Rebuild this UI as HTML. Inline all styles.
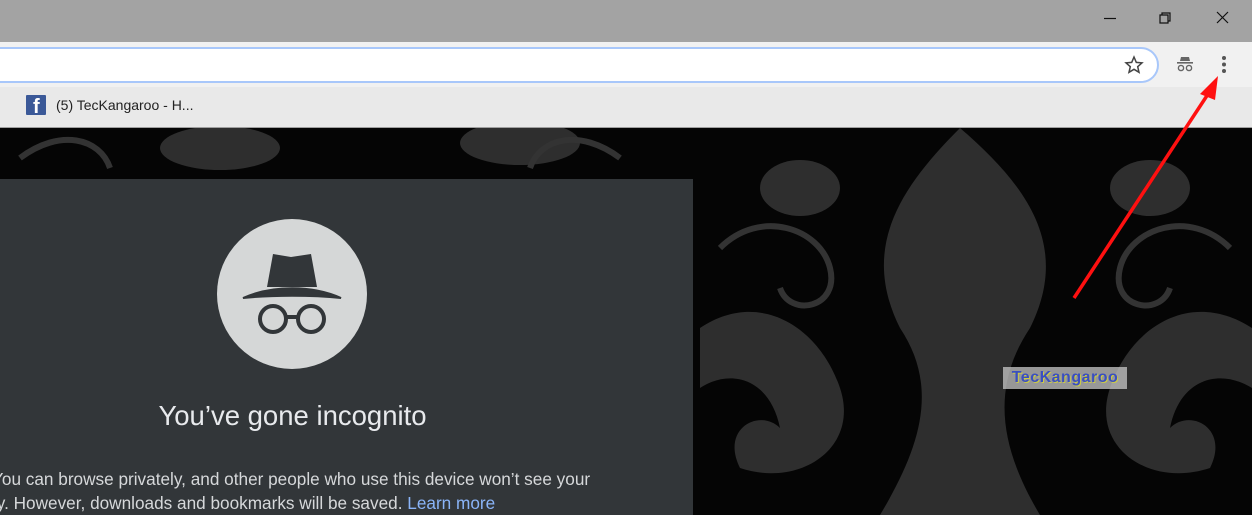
<!DOCTYPE html>
<html><head><style>
html,body{margin:0;width:1252px;height:515px;overflow:hidden}
body{position:relative;font-family:"Liberation Sans",sans-serif;background:#050505}
.t{position:absolute;left:0;top:0;width:1252px;height:42px;background:#a3a3a3}
.tb{position:absolute;left:0;top:42px;width:1252px;height:45px;background:#f1f1f1}
.bb{position:absolute;left:0;top:87px;width:1252px;height:40px;background:#e9e9e9;border-bottom:1px solid #a0a0a0}
.addr{position:absolute;left:-20px;top:47px;width:1175px;height:32px;background:#fff;border:2px solid #a8c7fa;border-radius:18px}
.panel{position:absolute;left:0;top:179px;width:693px;height:336px;background:#323639}
.h{position:absolute;left:0;width:585px;text-align:center;top:400px;font-size:27.5px;color:#e8eaed}
.p{position:absolute;left:-8px;font-size:17.2px;color:#d6d8da;white-space:nowrap}
.p a{color:#8ab4f8;text-decoration:none}
</style></head><body>
<svg style="position:absolute;left:0;top:128px" width="1252" height="387">
<g fill="#2e2e2e">
<path d="M960 0 C900 60 860 120 900 200 C940 260 920 320 880 387 L1040 387 C1000 320 990 260 1030 200 C1070 120 1030 60 960 0Z"/>
<path d="M700 200 C760 160 820 200 840 260 C860 320 800 360 740 340 C720 300 760 280 780 300 C770 250 730 240 700 260Z"/>
<path d="M1252 200 C1190 160 1130 200 1110 260 C1090 320 1150 360 1210 340 C1230 300 1190 280 1170 300 C1180 250 1220 240 1252 260Z"/>
<ellipse cx="800" cy="60" rx="40" ry="28"/><ellipse cx="1150" cy="60" rx="40" ry="28"/>
<ellipse cx="220" cy="20" rx="60" ry="22"/><ellipse cx="520" cy="15" rx="60" ry="22"/>
</g>
<g fill="none" stroke="#333" stroke-width="6">
<path d="M720 120 C760 80 820 100 830 140 C840 180 790 190 780 160"/>
<path d="M1230 120 C1190 80 1130 100 1120 140 C1110 180 1160 190 1170 160"/>
<path d="M20 30 C60 0 100 10 110 40"/><path d="M620 30 C580 0 540 10 530 40"/>
</g>
</svg>
<div class="t"></div>
<svg style="position:absolute;left:1100px;top:8px" width="140" height="24" fill="none" stroke="#111" stroke-width="1.2">
<path d="M4 10.5H16"/><path d="M60 7h8v8h-8z M62 7V5h8v8h-2"/><path d="M117 4l11 11M128 4l-11 11"/></svg>
<div class="tb"></div>
<div class="addr"></div>
<svg style="position:absolute;left:1124px;top:55px" width="20" height="20"><path d="M10 2l2.3 5.4 5.7.5-4.3 3.8 1.3 5.6L10 14.3 5 17.3l1.3-5.6L2 7.9l5.7-.5z" fill="none" stroke="#444" stroke-width="1.5"/></svg>
<svg style="position:absolute;left:1174px;top:55px" width="22" height="20" fill="#666"><path d="M7 2h8l1 4H6z"/><rect x="3" y="7" width="16" height="1.6"/><circle cx="7" cy="13" r="2.6" fill="none" stroke="#666" stroke-width="1.4"/><circle cx="15" cy="13" r="2.6" fill="none" stroke="#666" stroke-width="1.4"/></svg>
<svg style="position:absolute;left:1219px;top:55px" width="10" height="20" fill="#555"><circle cx="5" cy="3" r="2"/><circle cx="5" cy="9.5" r="2"/><circle cx="5" cy="16" r="2"/></svg>
<div class="bb"></div>
<div style="position:absolute;left:26px;top:95px;width:20px;height:20px;background:#3b5998;border-radius:1px;overflow:hidden"><span style="position:absolute;left:7px;top:1px;color:#fff;font-weight:bold;font-size:20px">f</span></div>
<div style="position:absolute;left:56px;top:97px;font-size:14px;color:#222">(5) TecKangaroo - H...</div>
<div class="panel"></div>
<svg style="position:absolute;left:217px;top:219px" width="150" height="150">
<circle cx="75" cy="75" r="75" fill="#d5d7d7"/>
<path d="M56 35 L74 38 L94 35 L100 68 L50 68Z" fill="#323639"/>
<path d="M26 79 C55 66 95 66 124 79 C95 76 55 76 26 79Z" fill="#323639" stroke="#323639" stroke-width="2"/>
<circle cx="56" cy="100" r="13" fill="none" stroke="#323639" stroke-width="4"/>
<circle cx="94" cy="100" r="13" fill="none" stroke="#323639" stroke-width="4"/>
<path d="M69 98h12" stroke="#323639" stroke-width="4"/>
</svg>
<div class="h">You’ve gone incognito</div>
<div class="p" style="top:469px">You can browse privately, and other people who use this device won’t see your</div>
<div class="p" style="top:493px">ty. However, downloads and bookmarks will be saved. <a>Learn more</a></div>
<div style="position:absolute;left:1003px;top:367px;width:124px;height:22px;background:rgba(200,200,200,.75);font:bold 16px 'Liberation Sans',sans-serif;color:#3a4fc0;text-align:center;line-height:22px;letter-spacing:.5px;text-shadow:1px 1px 0 #cc4">TecKangaroo</div>
<svg style="position:absolute;left:1060px;top:70px" width="170" height="240"><path d="M14 228 L152 18" stroke="#ff1010" stroke-width="3.5"/><path d="M158 6 L140 24 L155 30Z" fill="#ff1010"/></svg>
</body></html>
